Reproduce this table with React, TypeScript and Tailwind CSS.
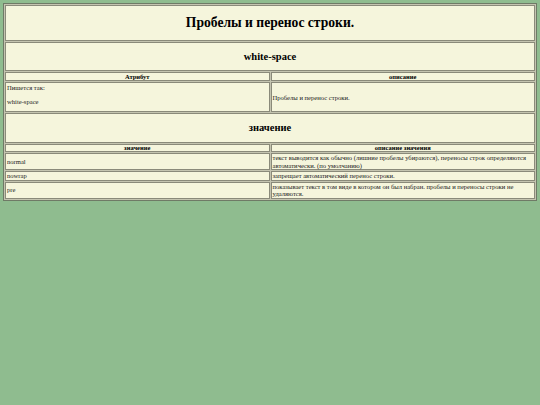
export default function App() {
  const cell = "border border-[#8a8a7a] bg-[#f5f5dc] p-0 align-middle";
  return (
    <div className="w-[540px] h-[405px] bg-[#8fbc8f] p-[3px]" style={{ fontFamily: '"Liberation Serif", serif' }}>
      <table className="w-[534px] border border-[#6f7a66] bg-[#c4c4b0] border-separate border-spacing-[1px] table-fixed text-[#222]">
        <tbody>
          <tr>
            <td colSpan={2} className={`${cell} h-[36px] text-center font-bold text-[13.6px] text-black`}>Пробелы и перенос строки.</td>
          </tr>
          <tr>
            <td colSpan={2} className={`${cell} h-[29px] text-center font-bold text-[10.5px] text-black`}>white-space</td>
          </tr>
          <tr>
            <th className={`${cell} h-[9px] text-center font-bold text-[6.5px] leading-[7px] text-black`}>Атрибут</th>
            <th className={`${cell} h-[9px] text-center font-bold text-[6.5px] leading-[7px] text-black`}>описание</th>
          </tr>
          <tr>
            <td className={`${cell} h-[30px] text-[6.6px] leading-[7px] px-[1px] align-top`}>
              <div className="pt-[1px]">Пишется так:</div>
              <div className="mt-[7px]">white-space</div>
            </td>
            <td className={`${cell} h-[30px] text-[6.6px] leading-[7px] px-[1px]`}>Пробелы и перенос строки.</td>
          </tr>
          <tr>
            <td colSpan={2} className={`${cell} h-[30px] text-center font-bold text-[10.5px] text-black`}>значение</td>
          </tr>
          <tr>
            <th className={`${cell} h-[8px] text-center font-bold text-[6.5px] leading-[6px] text-black`}>значение</th>
            <th className={`${cell} h-[8px] text-center font-bold text-[6.5px] leading-[6px] text-black`}>описание значения</th>
          </tr>
          <tr>
            <td className={`${cell} h-[16px] text-[6.6px] leading-[7.5px] px-[1px]`}>normal</td>
            <td className={`${cell} h-[16px] text-[6.6px] leading-[7.5px] px-[1px]`}>текст выводится как обычно (лишние пробелы убираются), переносы строк определяются автоматически. (по умолчанию)</td>
          </tr>
          <tr>
            <td className={`${cell} h-[9px] text-[6.6px] leading-[7.5px] px-[1px]`}>nowrap</td>
            <td className={`${cell} h-[9px] text-[6.6px] leading-[7.5px] px-[1px]`}>запрещает автоматический перенос строки.</td>
          </tr>
          <tr>
            <td className={`${cell} h-[16px] text-[6.6px] leading-[7.5px] px-[1px]`}>pre</td>
            <td className={`${cell} h-[16px] text-[6.6px] leading-[7.5px] px-[1px]`}>показывает текст в том виде в котором он был набран. пробелы и переносы строки не удаляются.</td>
          </tr>
        </tbody>
      </table>
    </div>
  );
}
